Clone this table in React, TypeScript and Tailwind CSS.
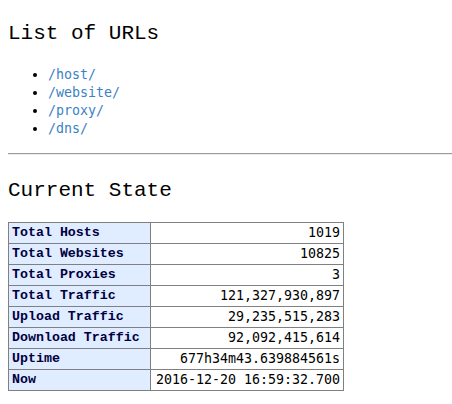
const urls = ["/host/", "/website/", "/proxy/", "/dns/"]

const stats = [
  { label: "Total Hosts", value: "1019" },
  { label: "Total Websites", value: "10825" },
  { label: "Total Proxies", value: "3" },
  { label: "Total Traffic", value: "121,327,930,897" },
  { label: "Upload Traffic", value: "29,235,515,283" },
  { label: "Download Traffic", value: "92,092,415,614" },
  { label: "Uptime", value: "677h34m43.639884561s" },
  { label: "Now", value: "2016-12-20 16:59:32.700" },
]

export default function App() {
  return (
    <div className="min-h-screen bg-white px-2 pt-[20px] text-black font-['Liberation_Mono',monospace]">
      {/* URLs */}
      <h2 className="h-[28px] text-[21px] leading-[28px]">List of URLs</h2>
      <ul className="mt-[18px] list-disc pl-10 text-[13.3px] leading-[18px] font-['DejaVu_Sans_Mono',monospace]">
        {urls.map((u) => (
          <li key={u} className="h-[18px]">
            <a href={u} className="text-[#3b82c4]">
              {u}
            </a>
          </li>
        ))}
      </ul>

      <hr className="mt-[15px] -mr-2 border-t border-b border-t-[#9a9a9a] border-b-[#eeeeee]" />

      {/* State */}
      <h2 className="mt-[22px] h-[28px] text-[21px] leading-[28px]">Current State</h2>
      <table className="mt-[17px] w-[336px] border-collapse border border-[#808080] text-[13.3px]">
        <tbody>
          {stats.map((s) => (
            <tr key={s.label} className="h-[21px]">
              <td className="w-[142px] border border-[#808080] bg-[#e0ecff] px-[3px] py-0 font-bold text-[#000040] leading-[20px] whitespace-nowrap">
                {s.label}
              </td>
              <td className="border border-[#808080] px-[3px] py-0 text-right leading-[20px] whitespace-nowrap font-['DejaVu_Sans_Mono',monospace]">
                {s.value}
              </td>
            </tr>
          ))}
        </tbody>
      </table>
    </div>
  )
}
